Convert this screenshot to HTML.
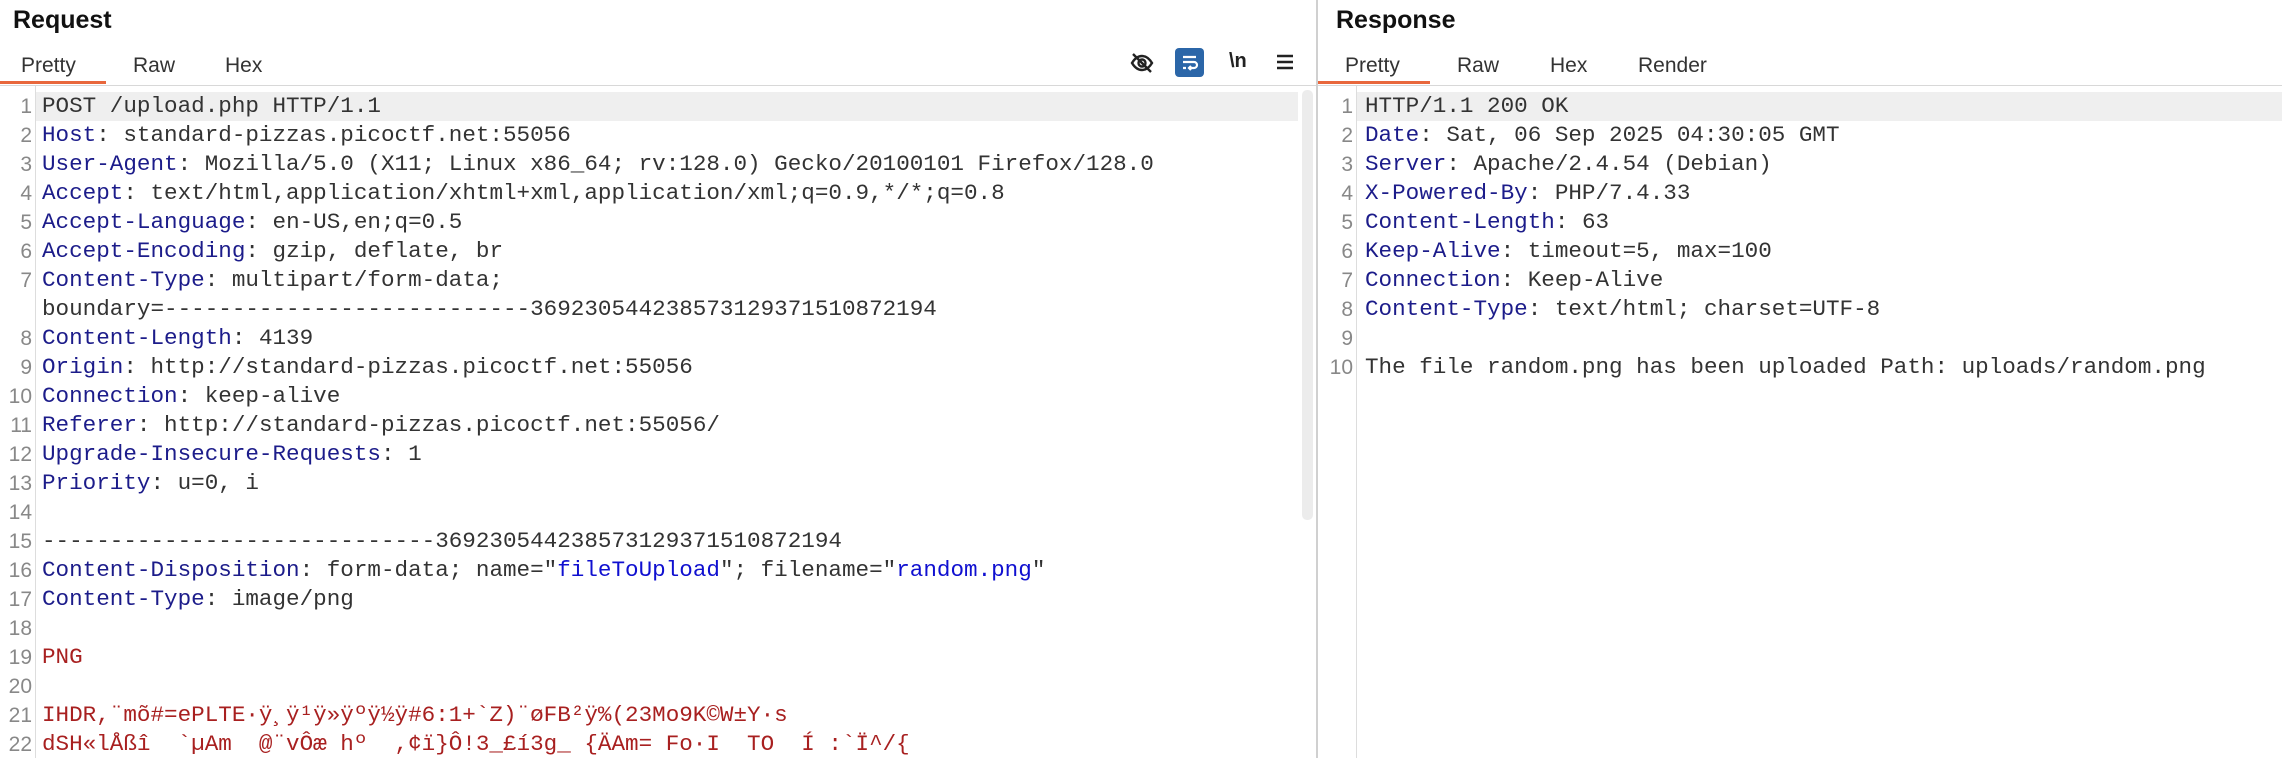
<!DOCTYPE html>
<html><head><meta charset="utf-8"><style>
body{margin:0;width:2282px;height:758px;background:#fff;position:relative;overflow:hidden;font-family:"Liberation Sans",sans-serif}
.t{position:absolute;font-size:25px;font-weight:bold;color:#111;top:6px}
.tab{position:absolute;top:54px;font-size:21px;color:#333}
.ul{position:absolute;top:81px;height:3px;background:#e8673c}
.hl{position:absolute;height:29px;background:#efefef}
.ln{position:absolute;width:30px;text-align:right;font-size:21px;color:#888;line-height:29px}
.c{position:absolute;font-family:"Liberation Mono",monospace;font-size:22.6px;line-height:29px;color:#333;white-space:pre}
.k{color:#1c1c8a}.b{color:#1010d0}.r{color:#a82020}
</style></head><body>
<div class="t" style="left:13px">Request</div>
<div class="t" style="left:1336px">Response</div>
<div class="tab" style="left:21px">Pretty</div><div class="tab" style="left:133px">Raw</div><div class="tab" style="left:225px">Hex</div>
<div class="tab" style="left:1345px">Pretty</div><div class="tab" style="left:1457px">Raw</div><div class="tab" style="left:1550px">Hex</div><div class="tab" style="left:1638px">Render</div>
<div style="position:absolute;left:0;top:85px;width:2282px;height:1px;background:#d8d8d8"></div>
<div class="ul" style="left:0;width:106px"></div>
<div class="ul" style="left:1318px;width:112px"></div>
<div style="position:absolute;left:1316px;top:0;width:2px;height:758px;background:#d0d0d0"></div>
<div style="position:absolute;left:35px;top:86px;width:1px;height:672px;background:#ddd"></div>
<div style="position:absolute;left:1356px;top:86px;width:1px;height:672px;background:#ddd"></div>
<div style="position:absolute;left:1302px;top:90px;width:11px;height:430px;background:#ececec;border-radius:5px"></div>
<div class="hl" style="left:36px;top:92px;width:1262px"></div>
<div class="hl" style="left:1357px;top:92px;width:925px"></div>
<svg style="position:absolute;left:1129px;top:50px" width="26" height="26" viewBox="0 0 26 26" fill="none" stroke="#222" stroke-width="2.4"><path d="M3 13c3-5 6.5-7 10-7s7 2 10 7c-3 5-6.5 7-10 7s-7-2-10-7z"/><circle cx="13" cy="13" r="3.5"/><path d="M4 4l18 18"/></svg>
<div style="position:absolute;left:1175px;top:48px;width:29px;height:29px;background:#2b66a8;border-radius:4px"></div>
<svg style="position:absolute;left:1175px;top:48px" width="29" height="29" viewBox="0 0 29 29" fill="none" stroke="#fff" stroke-width="2.2"><path d="M8 9h13M8 14h11a3 3 0 0 1 0 6h-4M8 20h3M16 18l-2 2 2 2"/></svg>
<div style="position:absolute;left:1229px;top:50px;font-size:20px;color:#222;font-weight:bold">\n</div>
<svg style="position:absolute;left:1277px;top:53px" width="16" height="18" viewBox="0 0 16 18" stroke="#222" stroke-width="2.4"><path d="M0 3h16M0 9h16M0 15h16"/></svg>
<div class="ln" style="left:2px;top:92px">1<br>2<br>3<br>4<br>5<br>6<br>7<br>&nbsp;<br>8<br>9<br>10<br>11<br>12<br>13<br>14<br>15<br>16<br>17<br>18<br>19<br>20<br>21<br>22</div>
<div class="c" style="left:42px;top:92px">POST /upload.php HTTP/1.1
<span class="k">Host</span>: standard-pizzas.picoctf.net:55056
<span class="k">User-Agent</span>: Mozilla/5.0 (X11; Linux x86_64; rv:128.0) Gecko/20100101 Firefox/128.0
<span class="k">Accept</span>: text/html,application/xhtml+xml,application/xml;q=0.9,*/*;q=0.8
<span class="k">Accept-Language</span>: en-US,en;q=0.5
<span class="k">Accept-Encoding</span>: gzip, deflate, br
<span class="k">Content-Type</span>: multipart/form-data;
boundary=---------------------------369230544238573129371510872194
<span class="k">Content-Length</span>: 4139
<span class="k">Origin</span>: http://standard-pizzas.picoctf.net:55056
<span class="k">Connection</span>: keep-alive
<span class="k">Referer</span>: http://standard-pizzas.picoctf.net:55056/
<span class="k">Upgrade-Insecure-Requests</span>: 1
<span class="k">Priority</span>: u=0, i

-----------------------------369230544238573129371510872194
<span class="k">Content-Disposition</span>: form-data; name="<span class="b">fileToUpload</span>"; filename="<span class="b">random.png</span>"
<span class="k">Content-Type</span>: image/png

<span class="r">PNG</span>

<span class="r">IHDR,¨mõ#=ePLTE·ÿ¸ÿ¹ÿ»ÿºÿ½ÿ#6:1+`Z)¨øFB²ÿ%(23Mo9K©W±Y·s</span>
<span class="r">dSH«lÅßî  `µAm  @¨vÔæ hº  ,¢ï}Ô!3_£í3g_ {ÄAm= Fo·I  TO  Í :`Ï^/{</span></div>
<div class="ln" style="left:1323px;top:92px">1<br>2<br>3<br>4<br>5<br>6<br>7<br>8<br>9<br>10</div>
<div class="c" style="left:1365px;top:92px">HTTP/1.1 200 OK
<span class="k">Date</span>: Sat, 06 Sep 2025 04:30:05 GMT
<span class="k">Server</span>: Apache/2.4.54 (Debian)
<span class="k">X-Powered-By</span>: PHP/7.4.33
<span class="k">Content-Length</span>: 63
<span class="k">Keep-Alive</span>: timeout=5, max=100
<span class="k">Connection</span>: Keep-Alive
<span class="k">Content-Type</span>: text/html; charset=UTF-8

The file random.png has been uploaded Path: uploads/random.png</div>
</body></html>
